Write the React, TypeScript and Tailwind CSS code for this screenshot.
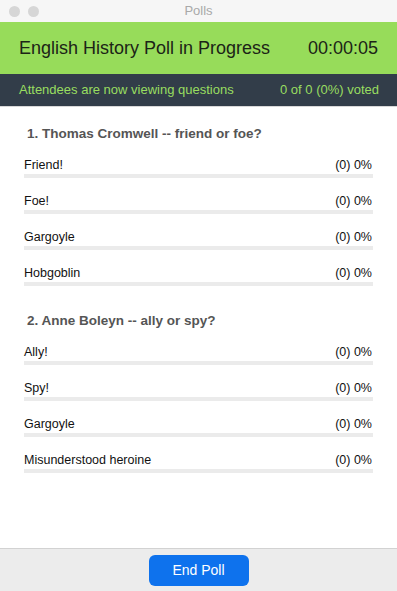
import React from 'react';

const questions = [
  {
    title: '1. Thomas Cromwell -- friend or foe?',
    answers: ['Friend!', 'Foe!', 'Gargoyle', 'Hobgoblin'],
  },
  {
    title: '2. Anne Boleyn -- ally or spy?',
    answers: ['Ally!', 'Spy!', 'Gargoyle', 'Misunderstood heroine'],
  },
];

export default function App() {
  return (
    <div
      className="flex h-[591px] w-[397px] flex-col overflow-hidden bg-white"
      style={{ fontFamily: '"Liberation Sans", Arial, sans-serif' }}
    >
      {/* Title bar */}
      <div className="relative flex h-[22px] items-center justify-center bg-[#f6f6f6]">
        <div className="absolute left-[9px] top-[6px] flex gap-[8px]">
          <span className="h-[11px] w-[11px] rounded-full bg-[#d6d6d6]" />
          <span className="h-[11px] w-[11px] rounded-full bg-[#d6d6d6]" />
        </div>
        <span className="text-[13px] text-[#a9a9a9]">Polls</span>
      </div>

      {/* Green header */}
      <div className="flex h-[52px] items-center justify-between bg-[#97dc5a] pl-[19px] pr-[19px] text-[#1c2417]">
        <span className="text-[18px]">English History Poll in Progress</span>
        <span className="text-[18px]">00:00:05</span>
      </div>

      {/* Status */}
      <div className="flex h-[32px] items-center justify-between bg-[#323d49] pl-[19px] pr-[18px] text-[13px] text-[#99dd60]">
        <span>Attendees are now viewing questions</span>
        <span>0 of 0 (0%) voted</span>
      </div>
      <div className="h-px bg-[#d8d8d8]" />

      {/* Questions */}
      <div className="flex flex-1 flex-col px-[24px] pt-[18px]">
        {questions.map((q, qi) => (
          <div key={qi} className={qi > 0 ? 'mt-[26px]' : ''}>
            <div className="pl-[3px] text-[13.5px] leading-[18px] font-bold text-[#555555]">{q.title}</div>
            <div className="mt-[14px] flex flex-col gap-[15px]">
              {q.answers.map((a) => (
                <div key={a}>
                  <div className="flex items-center justify-between text-[12.5px] leading-[16px] text-[#111111]">
                    <span>{a}</span>
                    <span className="pr-[1px]">(0) 0%</span>
                  </div>
                  <div className="mt-[1px] h-[4px] w-full bg-[#ebebeb]" />
                </div>
              ))}
            </div>
          </div>
        ))}
      </div>

      {/* Footer */}
      <div className="flex h-[43px] items-center justify-center border-t border-[#d2d2d2] bg-[#ececec]">
        <button className="h-[31px] w-[100px] rounded-[6px] bg-[#0e72ed] text-[14px] text-white">
          End Poll
        </button>
      </div>
    </div>
  );
}
